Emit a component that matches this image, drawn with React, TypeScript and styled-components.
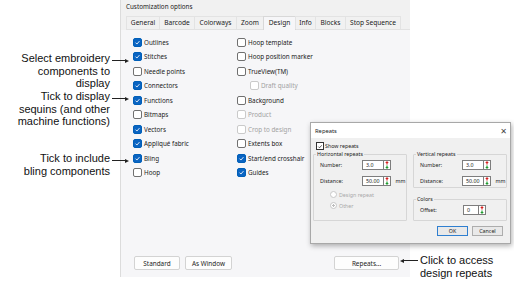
import React from 'react'
import styled, { createGlobalStyle } from 'styled-components'

const GlobalStyle = createGlobalStyle`
  html, body {
    margin: 0;
    padding: 0;
    background: #ffffff;
  }
  body {
    width: 514px;
    height: 288px;
    overflow: hidden;
  }
`

const uiFont = `'Noto Sans', 'Open Sans', 'DejaVu Sans', sans-serif`

const Page = styled.div`
  position: relative;
  display: flex;
  width: 514px;
  height: 288px;
  font-family: 'Liberation Sans', Arial, sans-serif;
  color: #111;
`

// ---- callouts ----

const Notes = styled.div`
  width: 110px;
  padding-right: 10px;
  flex-shrink: 0;
  display: flex;
  flex-direction: column;
  align-items: flex-end;
`

const Note = styled.div<{ $top: number }>`
  position: relative;
  margin-top: ${p => p.$top}px;
  font-size: 11px;
  line-height: 12.5px;
  text-align: right;
  white-space: nowrap;

  &::after {
    content: '';
    position: absolute;
    top: 8px;
    right: -17px;
    width: 15px;
    height: 1px;
    background: #222;
  }
  &::before {
    content: '';
    position: absolute;
    top: 6.5px;
    right: -19px;
    border-left: 4px solid #222;
    border-top: 2px solid transparent;
    border-bottom: 2px solid transparent;
  }
`

const SideNotes = styled.div`
  flex: 1;
  display: flex;
  flex-direction: column;
  justify-content: flex-end;
  padding: 0 0 9px 10px;
`

const SideNote = styled.div`
  position: relative;
  font-size: 11px;
  line-height: 12.5px;
  white-space: nowrap;

  &::after {
    content: '';
    position: absolute;
    top: 6px;
    left: -17px;
    width: 15px;
    height: 1px;
    background: #222;
  }
  &::before {
    content: '';
    position: absolute;
    top: 4.5px;
    left: -20px;
    border-right: 4px solid #222;
    border-top: 2px solid transparent;
    border-bottom: 2px solid transparent;
  }
`

// ---- customization panel ----

const Panel = styled.div`
  width: 290px;
  height: 277px;
  flex-shrink: 0;
  box-sizing: border-box;
  border-left: 1px solid #dcdcdc;
  background: #f6f6f8;
  display: flex;
  flex-direction: column;
  font-family: ${uiFont};
  font-size: 6.3px;
  color: #1b1b1b;
`

const PanelHead = styled.div`
  background: #f1f1f1;
  padding: 3px 0 0 5px;
`

const Caption = styled.div`
  height: 13px;
  line-height: 8px;
`

const Tabs = styled.div`
  display: flex;
  height: 13px;
  border-bottom: 1px solid #e2e2e2;
`

const Tab = styled.div<{ $w: number; $active?: boolean }>`
  width: ${p => p.$w}px;
  box-sizing: border-box;
  margin-right: -1px;
  border: 1px solid ${p => (p.$active ? '#d8d8d8' : '#e3e3e3')};
  border-bottom: none;
  background: ${p => (p.$active ? '#f6f6f8' : '#f1f1f1')};
  margin-bottom: ${p => (p.$active ? '-1px' : '0')};
  text-align: center;
  line-height: 12px;
  font-size: 6.6px;
  white-space: nowrap;
`

const Options = styled.div`
  display: grid;
  grid-template-columns: 104px 1fr;
  grid-template-rows: repeat(10, 14.5px);
  grid-auto-flow: column;
  padding: 5px 0 0 12px;
`

const Option = styled.label<{ $indent?: boolean; $dim?: boolean }>`
  display: flex;
  align-items: center;
  gap: 2px;
  padding-left: ${p => (p.$indent ? '13px' : '0')};
  color: ${p => (p.$dim ? '#a2a2a2' : 'inherit')};
  white-space: nowrap;
`

const Box = styled.span<{ $on?: boolean; $dim?: boolean }>`
  width: 9px;
  height: 9px;
  box-sizing: border-box;
  border-radius: 2px;
  border: 1px solid ${p => (p.$on ? '#005fb8' : p.$dim ? '#cacaca' : '#707070')};
  background: ${p => (p.$on ? '#0a64c2' : '#ffffff')};
  display: inline-flex;
  align-items: center;
  justify-content: center;
`

const Footer = styled.div`
  margin-top: auto;
  display: flex;
  gap: 5px;
  padding: 0 11px 7px 13px;
`

const Button = styled.div<{ $w: number; $push?: boolean }>`
  width: ${p => p.$w}px;
  height: 14px;
  box-sizing: border-box;
  margin-left: ${p => (p.$push ? 'auto' : '0')};
  border: 1px solid #d3d3d3;
  border-radius: 2px;
  background: #fdfdfd;
  display: flex;
  align-items: center;
  justify-content: center;
  font-size: 6.4px;
`

// ---- repeats dialog (floating window) ----

const Dialog = styled.div`
  position: absolute;
  left: 310px;
  top: 122px;
  width: 201px;
  height: 122px;
  box-sizing: border-box;
  border: 1px solid #a8a8a8;
  background: #f0f0f0;
  box-shadow: 1px 2px 5px rgba(0, 0, 0, 0.3);
  display: flex;
  flex-direction: column;
  font-family: ${uiFont};
  font-size: 5.3px;
  color: #1b1b1b;
`

const TitleBar = styled.div`
  height: 15px;
  flex-shrink: 0;
  background: #ffffff;
  display: flex;
  align-items: center;
  justify-content: space-between;
  padding: 0 3px 0 4px;
  font-size: 5.8px;
`

const Close = styled.span`
  font-size: 8px;
  color: #444;
`

const DialogBody = styled.div`
  padding: 4px 3px 0 2px;
  display: flex;
  flex-direction: column;
`

const ShowRow = styled.label`
  display: flex;
  align-items: center;
  gap: 1px;
  padding-left: 3px;
  height: 8px;
`

const ClassicBox = styled.span`
  width: 6px;
  height: 6px;
  border: 1px solid #333;
  background: #fff;
  display: inline-flex;
  align-items: center;
  justify-content: center;
`

const Groups = styled.div`
  display: grid;
  grid-template-columns: 94px 94px;
  column-gap: 6px;
  margin-top: 1px;
`

const Column = styled.div`
  display: flex;
  flex-direction: column;
  gap: 8px;
`

const Group = styled.fieldset<{ $h: number }>`
  height: ${p => p.$h}px;
  box-sizing: border-box;
  margin: 0;
  padding: 0 0 0 6px;
  border: 1px solid #d6d6d6;
  border-radius: 1px;
`

const Legend = styled.legend`
  padding: 0 1px;
  margin-left: -4px;
  font-size: 5.3px;
  line-height: 6px;
`

const Field = styled.div<{ $label: number }>`
  display: grid;
  grid-template-columns: ${p => p.$label}px auto auto;
  align-items: center;
  height: 16px;
`

const FieldBox = styled.div`
  display: flex;
  align-items: center;
`

const Input = styled.div<{ $w: number }>`
  width: ${p => p.$w}px;
  height: 10px;
  box-sizing: border-box;
  border: 1px solid #7d7d7d;
  border-right: none;
  background: #fff;
  padding-left: 3px;
  line-height: 8px;
`

const Spin = styled.div`
  width: 8px;
  height: 10px;
  box-sizing: border-box;
  border: 1px solid #7d7d7d;
  background: #fff;
  display: flex;
  align-items: center;
  justify-content: center;
`

const Unit = styled.span`
  margin-left: 4px;
`

const Radio = styled.label`
  display: flex;
  align-items: center;
  gap: 2px;
  height: 11px;
  padding-left: 10px;
  color: #a8a8a8;
`

const RadioDot = styled.span<{ $on?: boolean }>`
  width: 5px;
  height: 5px;
  border-radius: 50%;
  border: 1px solid #c8c8c8;
  background: ${p => (p.$on ? 'radial-gradient(circle, #bdbdbd 35%, #fff 40%)' : '#fff')};
`

const DialogButtons = styled.div`
  display: flex;
  justify-content: flex-end;
  gap: 4px;
  margin-top: 5px;
  padding-right: 4px;
`

const DButton = styled.div<{ $default?: boolean }>`
  width: 31px;
  height: 10px;
  box-sizing: border-box;
  border: 1px solid ${p => (p.$default ? '#2f7fd0' : '#adadad')};
  background: #e9e9e9;
  display: flex;
  align-items: center;
  justify-content: center;
  font-size: 5.3px;
`

const Check: React.FC<{ color?: string }> = ({ color = '#fff' }) => (
  <svg width="7" height="7" viewBox="0 0 10 10">
    <polyline points="2.2,5.2 4.2,7.2 7.8,3" fill="none" stroke={color} strokeWidth="1.2" />
  </svg>
)

const SpinArrows: React.FC = () => (
  <svg width="4" height="8" viewBox="0 0 4 8">
    <path d="M2 0 L3.8 2 L2.6 2 L2.6 3.6 L1.4 3.6 L1.4 2 L0.2 2 Z" fill="#d42020" />
    <path d="M2 8 L3.8 6 L2.6 6 L2.6 4.4 L1.4 4.4 L1.4 6 L0.2 6 Z" fill="#1e9a2e" />
  </svg>
)

type Opt = { label: string; on?: boolean; dim?: boolean; indent?: boolean }

const leftOptions: Opt[] = [
  { label: 'Outlines', on: true },
  { label: 'Stitches', on: true },
  { label: 'Needle points' },
  { label: 'Connectors', on: true },
  { label: 'Functions', on: true },
  { label: 'Bitmaps' },
  { label: 'Vectors', on: true },
  { label: 'Appliqué fabric', on: true },
  { label: 'Bling', on: true },
  { label: 'Hoop' }
]

const rightOptions: Opt[] = [
  { label: 'Hoop template' },
  { label: 'Hoop position marker' },
  { label: 'TrueView(TM)' },
  { label: 'Draft quality', dim: true, indent: true },
  { label: 'Background' },
  { label: 'Product', dim: true },
  { label: 'Crop to design', dim: true },
  { label: 'Extents box' },
  { label: 'Start/end crosshair', on: true },
  { label: 'Guides', on: true }
]

const tabs = [
  { label: 'General', w: 34 },
  { label: 'Barcode', w: 36 },
  { label: 'Colorways', w: 43 },
  { label: 'Zoom', w: 28 },
  { label: 'Design', w: 33, active: true },
  { label: 'Info', w: 21 },
  { label: 'Blocks', w: 31 },
  { label: 'Stop Sequence', w: 56 }
]

const SpinField: React.FC<{ label: string; value: string; w: number; labelW: number; unit?: string }> = ({
  label,
  value,
  w,
  labelW,
  unit
}) => (
  <Field $label={labelW}>
    <span>{label}</span>
    <FieldBox>
      <Input $w={w}>{value}</Input>
      <Spin>
        <SpinArrows />
      </Spin>
    </FieldBox>
    {unit ? <Unit>{unit}</Unit> : <span />}
  </Field>
)

export default function App() {
  return (
    <>
      <GlobalStyle />
      <Page>
        <Notes>
          <Note $top={52}>
            Select embroidery
            <br />
            components to
            <br />
            display
          </Note>
          <Note $top={0.5}>
            Tick to display
            <br />
            sequins (and other
            <br />
            machine functions)
          </Note>
          <Note $top={24.5}>
            Tick to include
            <br />
            bling components
          </Note>
        </Notes>

        <Panel>
          <PanelHead>
            <Caption>Customization options</Caption>
            <Tabs>
              {tabs.map(t => (
                <Tab key={t.label} $w={t.w} $active={t.active}>
                  {t.label}
                </Tab>
              ))}
            </Tabs>
          </PanelHead>
          <Options>
            {[...leftOptions, ...rightOptions].map(o => (
              <Option key={o.label} $indent={o.indent} $dim={o.dim}>
                <Box $on={o.on} $dim={o.dim}>
                  {o.on && <Check />}
                </Box>
                {o.label}
              </Option>
            ))}
          </Options>
          <Footer>
            <Button $w={46}>Standard</Button>
            <Button $w={47}>As Window</Button>
            <Button $w={65} $push>
              Repeats...
            </Button>
          </Footer>
        </Panel>

        <SideNotes>
          <SideNote>
            Click to access
            <br />
            design repeats
          </SideNote>
        </SideNotes>

        <Dialog>
          <TitleBar>
            <span>Repeats</span>
            <Close>✕</Close>
          </TitleBar>
          <DialogBody>
            <ShowRow>
              <ClassicBox>
                <Check color="#222" />
              </ClassicBox>
              Show repeats
            </ShowRow>
            <Groups>
              <Group $h={70}>
                <Legend>Horizontal repeats</Legend>
                <SpinField label="Number:" value="3.0" w={21} labelW={42} />
                <SpinField label="Distance:" value="50.00" w={21} labelW={42} unit="mm" />
                <Radio>
                  <RadioDot />
                  Design repeat
                </Radio>
                <Radio>
                  <RadioDot $on />
                  Other
                </Radio>
              </Group>
              <Column>
                <Group $h={37}>
                  <Legend>Vertical repeats</Legend>
                  <SpinField label="Number:" value="3.0" w={21} labelW={42} />
                  <SpinField label="Distance:" value="50.00" w={21} labelW={42} unit="mm" />
                </Group>
                <Group $h={25}>
                  <Legend>Colors</Legend>
                  <SpinField label="Offset:" value="0" w={15} labelW={43} />
                </Group>
              </Column>
            </Groups>
            <DialogButtons>
              <DButton $default>OK</DButton>
              <DButton>Cancel</DButton>
            </DialogButtons>
          </DialogBody>
        </Dialog>
      </Page>
    </>
  )
}
